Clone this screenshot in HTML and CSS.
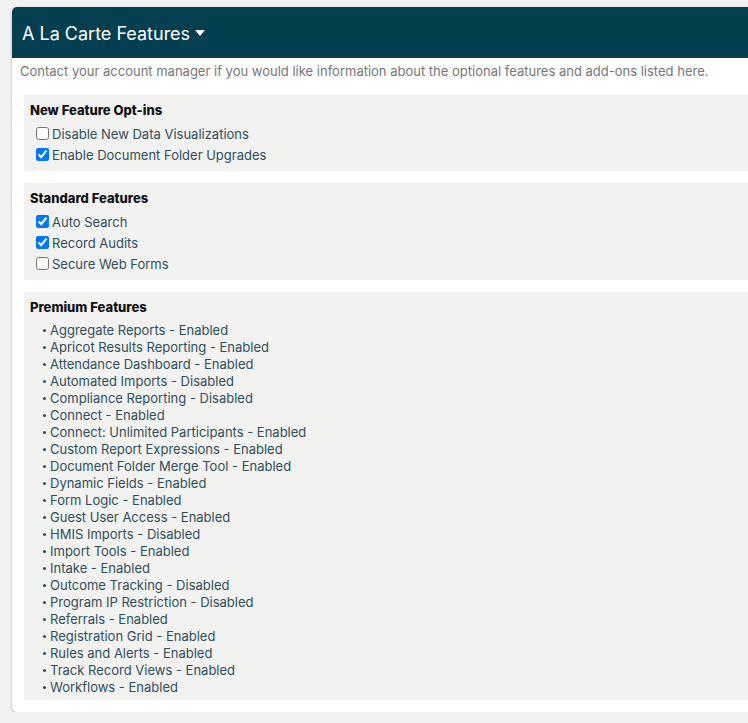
FILE: index.html
```html
<!DOCTYPE html>
<html lang="en">
<head>
    <meta charset="UTF-8">
    <meta name="viewport" content="width=device-width, initial-scale=1.0">
    <title>A La Carte Features</title>
    <link rel="stylesheet" href="styles.css">
</head>
<body>
    <div class="panel">
        <div class="panel-header">
            <h2 class="panel-title">A La Carte Features <span class="caret"></span></h2>
        </div>
        <div class="panel-body">
            <p class="intro">Contact your account manager if you would like information about the optional features and add-ons listed here.</p>

            <div class="feature-group">
                <h3 class="group-title">New Feature Opt-ins</h3>
                <label class="option"><input type="checkbox"> Disable New Data Visualizations</label>
                <label class="option"><input type="checkbox" checked> Enable Document Folder Upgrades</label>
            </div>

            <div class="feature-group">
                <h3 class="group-title">Standard Features</h3>
                <label class="option"><input type="checkbox" checked> Auto Search</label>
                <label class="option"><input type="checkbox" checked> Record Audits</label>
                <label class="option"><input type="checkbox"> Secure Web Forms</label>
            </div>

            <div class="feature-group premium">
                <h3 class="group-title">Premium Features</h3>
                <ul class="feature-list">
                    <li>Aggregate Reports - Enabled</li>
                    <li>Apricot Results Reporting - Enabled</li>
                    <li>Attendance Dashboard - Enabled</li>
                    <li>Automated Imports - Disabled</li>
                    <li>Compliance Reporting - Disabled</li>
                    <li>Connect - Enabled</li>
                    <li>Connect: Unlimited Participants - Enabled</li>
                    <li>Custom Report Expressions - Enabled</li>
                    <li>Document Folder Merge Tool - Enabled</li>
                    <li>Dynamic Fields - Enabled</li>
                    <li>Form Logic - Enabled</li>
                    <li>Guest User Access - Enabled</li>
                    <li>HMIS Imports - Disabled</li>
                    <li>Import Tools - Enabled</li>
                    <li>Intake - Enabled</li>
                    <li>Outcome Tracking - Disabled</li>
                    <li>Program IP Restriction - Disabled</li>
                    <li>Referrals - Enabled</li>
                    <li>Registration Grid - Enabled</li>
                    <li>Rules and Alerts - Enabled</li>
                    <li>Track Record Views - Enabled</li>
                    <li>Workflows - Enabled</li>
                </ul>
            </div>
        </div>
    </div>
</body>
</html>
```

FILE: styles.css
```css
* {
    margin: 0;
    padding: 0;
    box-sizing: border-box;
}

body {
    background-color: #f1f1f1;
    font-family: Inter, Roboto, 'Liberation Sans', sans-serif;
    font-size: 13px;
    overflow: hidden;
    padding: 7px 0 0 12px;
}

.panel {
    width: 760px;
    background-color: #fff;
    border-radius: 5px;
    box-shadow: 0 1px 3px rgba(0, 0, 0, 0.25);
    overflow: hidden;
}

.panel-header {
    height: 51px;
    background-color: #043f4f;
    display: flex;
    align-items: center;
    padding-left: 10px;
}

.panel-title {
    color: #fff;
    font-size: 18px;
    font-weight: 400;
    display: flex;
    align-items: center;
    gap: 5px;
    margin-top: 1px;
}

.caret {
    width: 0;
    height: 0;
    border-left: 5px solid transparent;
    border-right: 5px solid transparent;
    border-top: 6px solid #fff;
}

.panel-body {
    padding: 4px 0 12px 8px;
}

.intro {
    color: #777;
    line-height: 18px;
    margin-bottom: 15px;
}

.feature-group {
    background-color: #f2f2f1;
    margin: 0 0 12px 4px;
    padding: 6px 6px 6px;
}

.feature-group.premium {
    margin-bottom: 0;
    padding-bottom: 5px;
}

.group-title {
    color: #111;
    font-size: 13px;
    font-weight: 800;
    line-height: 18px;
    margin-bottom: 4px;
}

.option {
    display: flex;
    align-items: center;
    height: 21px;
    color: #2f4f5d;
}

.option input {
    margin: 0 3px 0 6px;
    width: 13px;
    height: 13px;
}

.feature-list {
    list-style: none;
    color: #2f4f5d;
    margin-top: 5px;
}

.feature-list li {
    display: flex;
    align-items: center;
    height: 17px;
    padding-left: 12px;
}

.feature-list li::before {
    content: "";
    width: 3px;
    height: 3px;
    border-radius: 50%;
    background-color: currentColor;
    margin: 1px 4px 0 1px;
}
```
